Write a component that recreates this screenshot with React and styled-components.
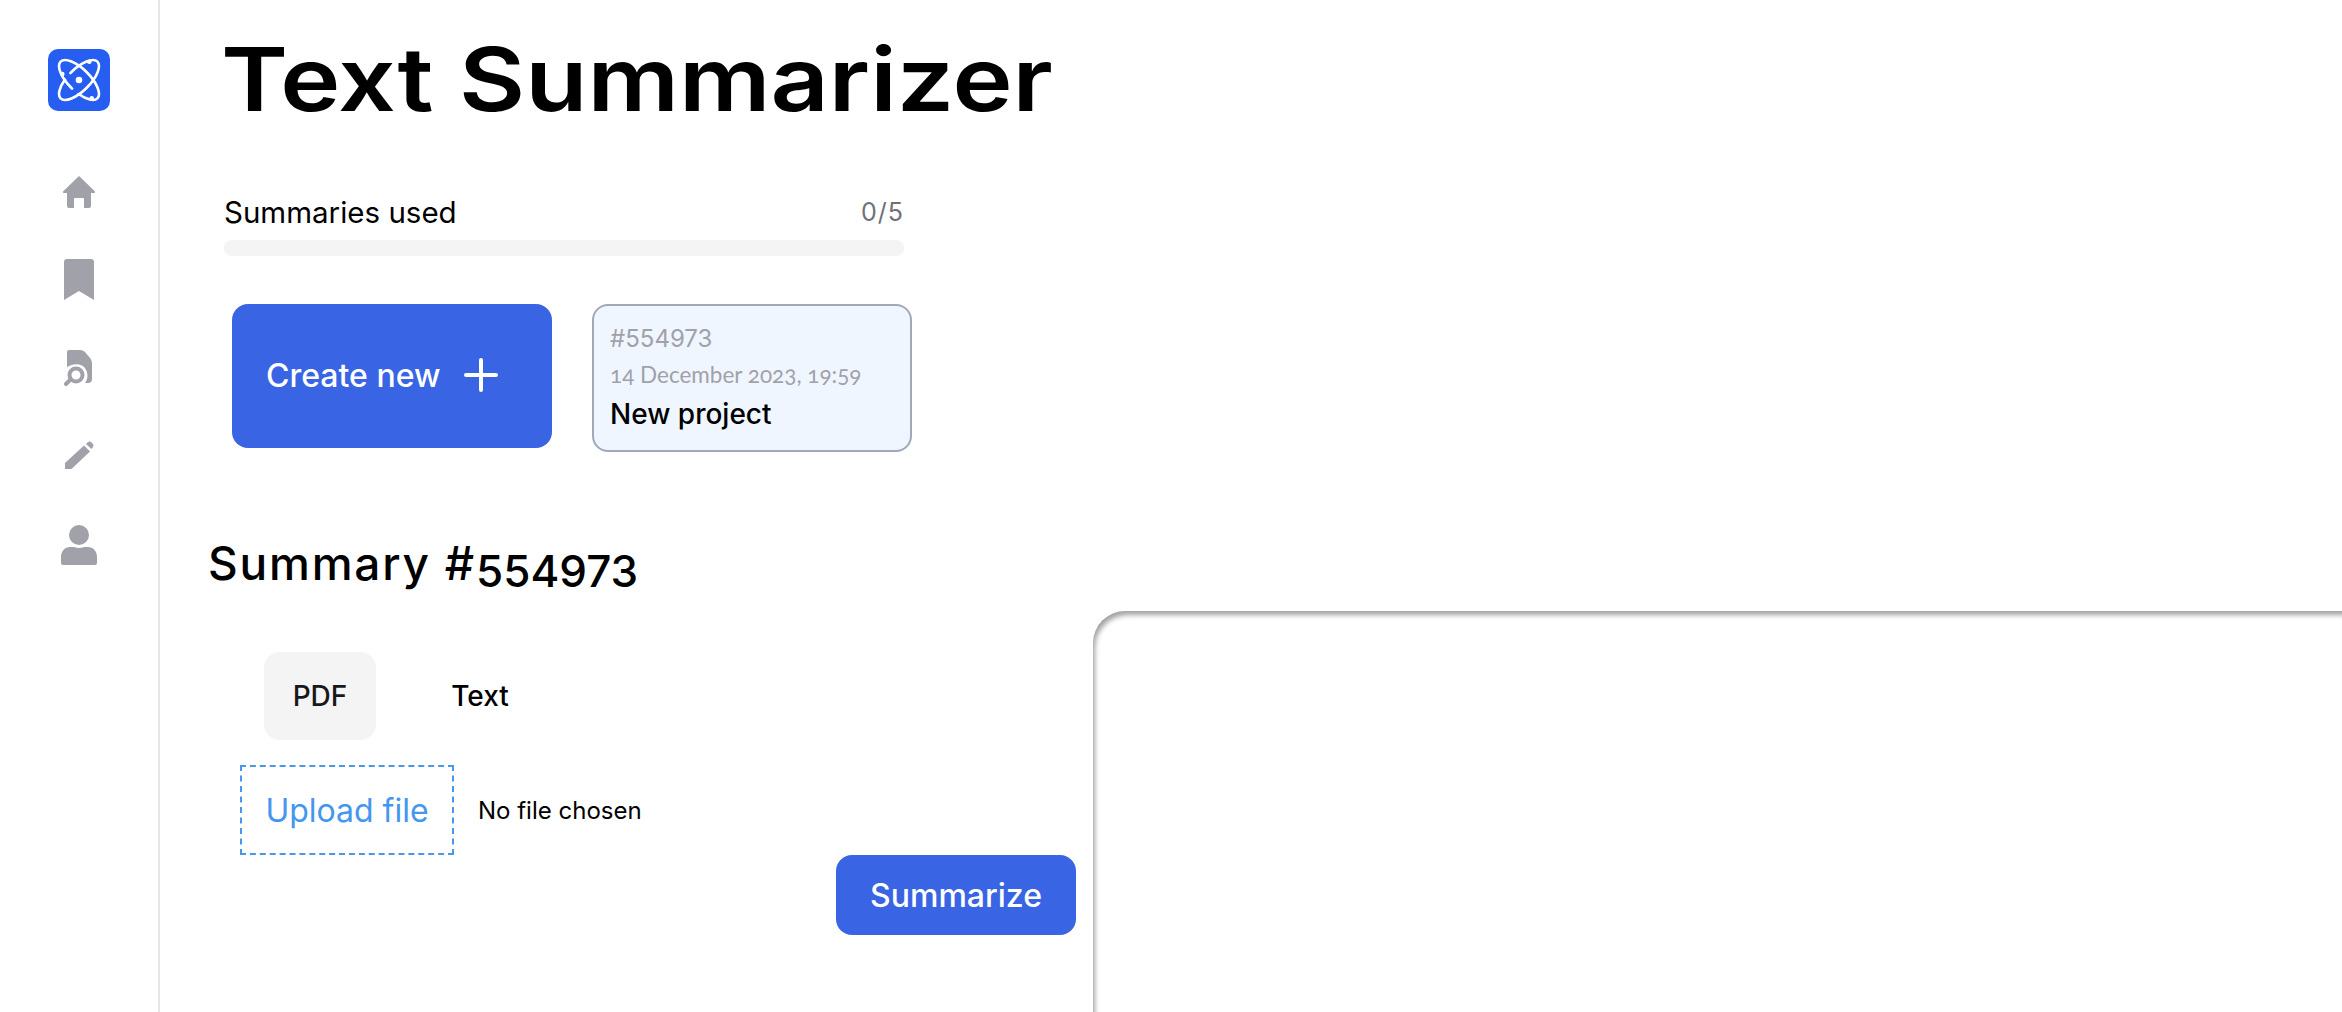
import React from "react";
import styled, { createGlobalStyle } from "styled-components";

const GlobalStyle = createGlobalStyle`
  html, body {
    margin: 0;
    padding: 0;
    background: #fff;
    overflow: hidden;
  }
  body {
    font-family: "Inter", "Liberation Sans", sans-serif;
    color: #000;
  }
`;

const Page = styled.div`
  display: flex;
  width: 2342px;
  height: 1012px;
  overflow: hidden;
`;

const Sidebar = styled.nav`
  flex: none;
  box-sizing: border-box;
  width: 160px;
  height: 100%;
  border-right: 2px solid #e5e5e5;
  padding-top: 49px;
  display: flex;
  flex-direction: column;
  align-items: center;
`;

const Logo = styled.div`
  width: 62px;
  height: 62px;
  border-radius: 10px;
  background: #255ef0;
  display: flex;
  align-items: center;
  justify-content: center;
  margin-bottom: 57px;
`;

const NavItem = styled.a`
  display: flex;
  align-items: center;
  justify-content: center;
  width: 48px;
  height: 48px;
  margin-bottom: ${(p) => p.$gap || 40}px;
  color: #a1a1aa;
`;

const Main = styled.main`
  flex: 1;
  min-width: 0;
  display: flex;
  flex-direction: column;
`;

const Title = styled.h1`
  margin: 0 0 0 61px;
  font-size: 88px;
  line-height: 106px;
  padding-top: 26px;
  font-weight: 600;
  transform: scaleX(1.155);
  transform-origin: left center;
  color: #000;
`;

const Usage = styled.section`
  width: 680px;
  margin: 64px 0 0 64px;
`;

const UsageHead = styled.div`
  display: flex;
  justify-content: space-between;
  align-items: center;
  height: 32px;
`;

const UsageLabel = styled.span`
  font-size: 29.5px;
  font-weight: 400;
`;

const UsageCount = styled.span`
  font-size: 25px;
  letter-spacing: 1px;
  color: #71717a;
`;

const Track = styled.div`
  height: 16px;
  border-radius: 8px;
  background: #f4f4f5;
  margin-top: 12px;
`;

const Projects = styled.div`
  display: flex;
  align-items: flex-start;
  gap: 40px;
  margin: 48px 0 0 72px;
`;

const CreateButton = styled.button`
  box-sizing: border-box;
  width: 320px;
  height: 144px;
  padding: 0 0 2px 34px;
  border: 0;
  border-radius: 16px;
  background: #3964e4;
  color: #fff;
  font: 500 32px "Inter", sans-serif;
  display: flex;
  align-items: center;
  gap: 24px;
`;

const ProjectCard = styled.div`
  box-sizing: border-box;
  width: 320px;
  height: 148px;
  border: 2px solid #a1a8b8;
  border-radius: 16px;
  background: #eff6ff;
  padding: 15px 16px;
`;

const CardId = styled.div`
  font-size: 24px;
  line-height: 36px;
  color: #a1a1aa;
`;

const CardDate = styled.div`
  font-family: "Lato", "Inter", sans-serif;
  font-size: 22.5px;
  line-height: 36px;
  font-variant-numeric: oldstyle-nums;
  color: #a1a1aa;
`;

const CardName = styled.div`
  margin-top: 1px;
  font-size: 28px;
  line-height: 40px;
  font-weight: 500;
`;

const Lower = styled.div`
  flex: 1;
  display: flex;
  min-height: 0;
`;

const Left = styled.div`
  flex: none;
  width: 933px;
  display: flex;
  flex-direction: column;
`;

const SummaryTitle = styled.h2`
  font-size: 46px;
  line-height: 56px;
  height: 56px;
  font-weight: 500;
  letter-spacing: 1.8px;
  margin: 83px 0 0 48px;
`;

const SummaryNumber = styled.span`
  display: inline-block;
  line-height: 1;
  vertical-align: -7px;
  letter-spacing: 0;
  font-size: 44px;
`;

const Tabs = styled.div`
  display: flex;
  gap: 48px;
  margin: 61px 0 0 104px;
`;

const Tab = styled.button`
  width: 112px;
  height: 88px;
  border: 0;
  border-radius: 16px;
  background: ${(p) => (p.$active ? "#f4f4f5" : "transparent")};
  color: ${(p) => (p.$active ? "#18181b" : "#000")};
  font: 500 28px "Inter", sans-serif;
`;

const UploadRow = styled.div`
  display: flex;
  align-items: center;
  gap: 24px;
  margin: 25px 0 0 80px;
`;

const UploadLabel = styled.label`
  box-sizing: border-box;
  width: 214px;
  height: 90px;
  border: 2px dashed #4a97ea;
  color: #4496ee;
  font-size: 32px;
  display: flex;
  align-items: center;
  justify-content: center;
`;

const NoFile = styled.span`
  font-size: 24px;
  color: #000;
`;

const Actions = styled.div`
  display: flex;
  justify-content: flex-end;
  padding-right: 17px;
`;

const SummarizeButton = styled.button`
  width: 240px;
  height: 80px;
  border: 0;
  border-radius: 16px;
  background: #3964e4;
  color: #fff;
  font: 500 32px "Inter", sans-serif;
`;

const Output = styled.div`
  flex: 1;
  margin-top: 159px;
  margin-bottom: -60px;
  border-radius: 32px 0 0 0;
  background: #fff;
  box-shadow: inset 3px 5px 5px -1px rgba(0, 0, 0, 0.36);
`;

function AtomIcon() {
  return (
    <svg width="46" height="46" viewBox="-23 -23 46 46" fill="none" stroke="#fff" strokeWidth="2.6" strokeLinecap="round">
      <ellipse rx="26" ry="11" transform="rotate(45)" pathLength="100" strokeDasharray="17 7 76 0" />
      <ellipse rx="26" ry="11" transform="rotate(-45)" pathLength="100" strokeDasharray="67 7 26 0" />
      <circle r="3.3" fill="#fff" stroke="none" />
      <circle cx="-16.7" cy="-6" r="2.3" fill="#fff" stroke="none" />
      <circle cx="10.3" cy="-18.3" r="2.3" fill="#fff" stroke="none" />
      <circle cx="12.7" cy="18.3" r="2.3" fill="#fff" stroke="none" />
    </svg>
  );
}

function HomeIcon() {
  return (
    <svg width="34" height="34" viewBox="0 0 34 34" fill="currentColor">
      <path d="M17 1 L33 16.500 Q33.500 18 32 18 L29 18 L29 30.500 Q29 33 27 33 L22 33 L22 24 Q22 23 21 23 L13 23 Q12 23 12 24 L12 33 L7 33 Q5 33 5 30.500 L5 18 L2 18 Q.5 18 1 16.500 Z" />
    </svg>
  );
}

function BookmarkIcon() {
  return (
    <svg width="30" height="42" viewBox="0 0 30 42" fill="currentColor">
      <path d="M0 3 Q0 0 3 0 L27 0 Q30 0 30 3 L30 41 L15 32 L0 41 Z" />
    </svg>
  );
}

function SearchDocIcon() {
  return (
    <svg width="30" height="36" viewBox="0 0 30 36" fill="currentColor">
      <path d="M3 2 Q3 0 5 0 L16 0 Q19 0 21 2 L26 8 Q28 10 28 13 L28 29 Q28 33 24 33 L21 33 C25 28 24 20 19 16 C14 13 8 14 3 17 Z" />
      <circle cx="12" cy="25" r="6.500" fill="none" stroke="currentColor" strokeWidth="4" />
      <path d="M6 30 L2 34" stroke="currentColor" strokeWidth="4" strokeLinecap="round" />
    </svg>
  );
}

function PencilIcon() {
  return (
    <svg width="30" height="30" viewBox="0 0 30 30" fill="currentColor">
      <path d="M1 22 L20 4.500 L26 10.500 L7.500 28 L1 28 Z" />
      <path d="M22 3 L24 1 Q25.500 0 27 1 L29 3 Q30 4.500 29 6 L27.500 8 Z" />
    </svg>
  );
}

function UserIcon() {
  return (
    <svg width="36" height="42" viewBox="0 0 36 42" fill="currentColor">
      <circle cx="18" cy="10" r="10" />
      <path d="M0 32 C0 26 4 22 9 22 L13 22 Q18 24 23 22 L27 22 C32 22 36 26 36 32 L36 38 Q36 40 34 40 L2 40 Q0 40 0 38 Z" />
    </svg>
  );
}

function PlusIcon() {
  return (
    <svg width="34" height="34" viewBox="0 0 34 34" stroke="#fff" strokeWidth="4" strokeLinecap="round">
      <path d="M17 2V32M2 17H32" />
    </svg>
  );
}

export default function App() {
  return (
    <Page>
      <GlobalStyle />
      <Sidebar>
        <Logo>
          <AtomIcon />
        </Logo>
        <NavItem><HomeIcon /></NavItem>
        <NavItem><BookmarkIcon /></NavItem>
        <NavItem><SearchDocIcon /></NavItem>
        <NavItem $gap={42}><PencilIcon /></NavItem>
        <NavItem><UserIcon /></NavItem>
      </Sidebar>
      <Main>
        <Title>Text Summarizer</Title>
        <Usage>
          <UsageHead>
            <UsageLabel>Summaries used</UsageLabel>
            <UsageCount>0/5</UsageCount>
          </UsageHead>
          <Track />
        </Usage>
        <Projects>
          <CreateButton>
            Create new
            <PlusIcon />
          </CreateButton>
          <ProjectCard>
            <CardId>#554973</CardId>
            <CardDate>14 December 2023, 19:59</CardDate>
            <CardName>New project</CardName>
          </ProjectCard>
        </Projects>
        <Lower>
          <Left>
            <SummaryTitle>
              Summary #<SummaryNumber>554973</SummaryNumber>
            </SummaryTitle>
            <Tabs>
              <Tab $active>PDF</Tab>
              <Tab>Text</Tab>
            </Tabs>
            <UploadRow>
              <UploadLabel>Upload file</UploadLabel>
              <NoFile>No file chosen</NoFile>
            </UploadRow>
            <Actions>
              <SummarizeButton>Summarize</SummarizeButton>
            </Actions>
          </Left>
          <Output />
        </Lower>
      </Main>
    </Page>
  );
}
